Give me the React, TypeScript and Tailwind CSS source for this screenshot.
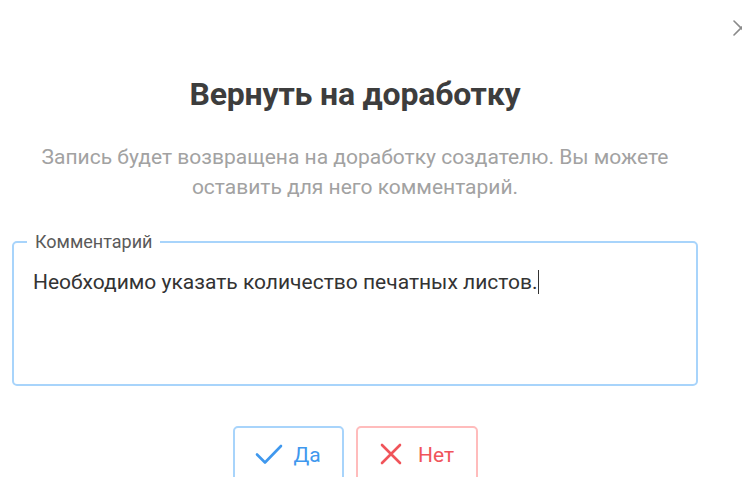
import React from "react";

function CheckIcon() {
  return (
    <svg width="28" height="22" viewBox="0 0 28 22" fill="none">
      <path d="M2 11.5 L10 19.5 L26 3" stroke="#3f98ee" strokeWidth="2.6" strokeLinecap="round" strokeLinejoin="round" />
    </svg>
  );
}

function CrossIcon() {
  return (
    <svg width="24" height="24" viewBox="0 0 24 24" fill="none">
      <path d="M3 3 L21 21 M21 3 L3 21" stroke="#f0545a" strokeWidth="2.6" strokeLinecap="round" />
    </svg>
  );
}

function CloseIcon() {
  return (
    <svg width="18" height="18" viewBox="0 0 18 18" fill="none">
      <path d="M2 2 L16 16 M16 2 L2 16" stroke="#8a8a8a" strokeWidth="1.6" strokeLinecap="round" />
    </svg>
  );
}

export default function App() {
  return (
    <div className="relative w-[742px] h-[477px] overflow-hidden bg-white font-['Roboto',sans-serif]">
      <button aria-label="Закрыть" className="absolute left-[732px] top-[19px]">
        <CloseIcon />
      </button>
      <div className="w-[710px] flex flex-col items-center pt-[74px]">
        <h2 className="text-[32px] leading-[40px] font-bold text-[#3d3d3d] tracking-[-0.2px]">Вернуть на доработку</h2>
        <p className="mt-[28px] text-[21px] leading-[30px] text-[#a2a2a2] text-center w-[680px]">
          Запись будет возвращена на доработку создателю. Вы можете оставить для него комментарий.
        </p>
        <fieldset className="mt-[30px] ml-[12px] w-[686px] h-[154px] border-2 border-[#a8d4fb] rounded-[5px] px-[19px] self-start">
          <legend className="ml-[-6px] px-[8px] text-[18px] leading-[20px] text-[#5a5a5a]">Комментарий</legend>
          <div className="mt-[17px] text-[21px] leading-[26px] text-[#333] flex items-center">
            Необходимо указать количество печатных листов.
            <span className="inline-block w-px h-[24px] bg-[#333] ml-[1px]" />
          </div>
        </fieldset>
        <div className="mt-[40px] flex gap-[12px]">
          <button className="w-[111px] h-[60px] border-2 border-[#a8d4fb] rounded-[5px] flex items-start justify-center pt-[15px] gap-[10px] text-[#3f98ee] text-[21px]">
            <CheckIcon />
            <span className="leading-[24px]">Да</span>
          </button>
          <button className="w-[122px] h-[60px] border-2 border-[#ffbcbc] rounded-[5px] flex items-start justify-center pt-[14px] gap-[15px] text-[#f0545a] text-[21px]">
            <CrossIcon />
            <span className="leading-[26px]">Нет</span>
          </button>
        </div>
      </div>
    </div>
  );
}
